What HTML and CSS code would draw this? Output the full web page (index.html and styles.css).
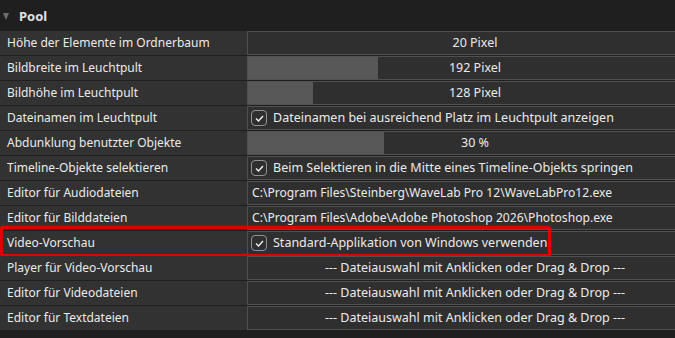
FILE: index.html
```html
<!DOCTYPE html>
<html lang="de">
<head>
    <meta charset="UTF-8">
    <meta name="viewport" content="width=device-width, initial-scale=1.0">
    <title>Einstellungen - Pool</title>
    <link rel="stylesheet" href="styles.css">
</head>
<body>
    <div class="panel">
        <!-- Group header -->
        <div class="group-head">
            <span class="arrow"></span>
            <span class="group-title">Pool</span>
        </div>

        <div class="rows">
            <div class="row">
                <div class="label">Höhe der Elemente im Ordnerbaum</div>
                <div class="value center">20 Pixel</div>
            </div>
            <div class="row">
                <div class="label">Bildbreite im Leuchtpult</div>
                <div class="value slider center"><span class="fill" style="width: 130px"></span><span class="num">192 Pixel</span></div>
            </div>
            <div class="row">
                <div class="label">Bildhöhe im Leuchtpult</div>
                <div class="value slider center"><span class="fill" style="width: 65px"></span><span class="num">128 Pixel</span></div>
            </div>
            <div class="row">
                <div class="label">Dateinamen im Leuchtpult</div>
                <div class="value check"><span class="box"><svg width="9" height="7" viewBox="0 0 9 7"><polyline points="1,3.5 3.5,6 8,1" /></svg></span>Dateinamen bei ausreichend Platz im Leuchtpult anzeigen</div>
            </div>
            <div class="row">
                <div class="label">Abdunklung benutzter Objekte</div>
                <div class="value slider center"><span class="fill" style="width: 136px"></span><span class="num">30 %</span></div>
            </div>
            <div class="row">
                <div class="label">Timeline-Objekte selektieren</div>
                <div class="value check"><span class="box"><svg width="9" height="7" viewBox="0 0 9 7"><polyline points="1,3.5 3.5,6 8,1" /></svg></span>Beim Selektieren in die Mitte eines Timeline-Objekts springen</div>
            </div>
            <div class="row">
                <div class="label">Editor für Audiodateien</div>
                <div class="value path">C:\Program Files\Steinberg\WaveLab Pro 12\WaveLabPro12.exe</div>
            </div>
            <div class="row">
                <div class="label">Editor für Bilddateien</div>
                <div class="value path">C:\Program Files\Adobe\Adobe Photoshop 2026\Photoshop.exe</div>
            </div>
            <div class="row highlighted">
                <div class="label">Video-Vorschau</div>
                <div class="value check"><span class="box"><svg width="9" height="7" viewBox="0 0 9 7"><polyline points="1,3.5 3.5,6 8,1" /></svg></span>Standard-Applikation von Windows verwenden</div>
                <span class="marker"></span>
            </div>
            <div class="row">
                <div class="label">Player für Video-Vorschau</div>
                <div class="value center">--- Dateiauswahl mit Anklicken oder Drag &amp; Drop ---</div>
            </div>
            <div class="row">
                <div class="label">Editor für Videodateien</div>
                <div class="value center">--- Dateiauswahl mit Anklicken oder Drag &amp; Drop ---</div>
            </div>
            <div class="row">
                <div class="label">Editor für Textdateien</div>
                <div class="value center">--- Dateiauswahl mit Anklicken oder Drag &amp; Drop ---</div>
            </div>
        </div>
    </div>
</body>
</html>
```

FILE: styles.css
```css
/* General Styles */
body {
    margin: 0;
    padding: 0;
    background: #1f1f1f;
    color: #ebebeb;
    font-family: "Noto Sans", "Open Sans", sans-serif;
    font-size: 12px;
    overflow: hidden;
}

.panel {
    width: 703px;
}

/* Group header */
.group-head {
    height: 31px;
    display: flex;
    align-items: center;
    padding-left: 3px;
    box-sizing: border-box;
}

.arrow {
    width: 0;
    height: 0;
    border-left: 3.5px solid transparent;
    border-right: 3.5px solid transparent;
    border-top: 7px solid #6e6e6e;
    margin-right: 10px;
    margin-top: 1px;
}

.group-title {
    font-size: 13px;
    font-weight: bold;
    color: #e0e0e0;
}

/* Rows */
.rows {
    display: flex;
    flex-direction: column;
    gap: 1px;
}

.row {
    display: grid;
    grid-template-columns: 247px 456px;
    height: 24px;
    position: relative;
}

.label {
    background: #323232;
    padding-left: 7px;
    line-height: 24px;
    white-space: nowrap;
}

.value {
    background: #2f2f2f;
    border: 1px solid #505050;
    box-sizing: border-box;
    font-size: 12.5px;
    line-height: 22px;
    white-space: nowrap;
    overflow: hidden;
}

.value.center {
    text-align: center;
}

.value.path {
    padding-left: 4px;
    font-size: 12.1px;
}

.value.slider {
    position: relative;
}

.slider .fill {
    position: absolute;
    left: 0;
    top: 0;
    bottom: 0;
    background: #575757;
}

.slider .num {
    position: relative;
}

.value.check {
    display: flex;
    align-items: center;
    padding-left: 3px;
}

.box {
    width: 14px;
    height: 14px;
    border: 1px solid #939393;
    border-radius: 4px;
    margin-right: 6px;
    display: flex;
    align-items: center;
    justify-content: center;
}

.box polyline {
    fill: none;
    stroke: #f0f0f0;
    stroke-width: 1.4;
}

/* Red annotation frame */
.marker {
    position: absolute;
    left: 0;
    top: -5px;
    width: 551px;
    height: 31px;
    border: 3px solid #e00000;
    border-radius: 2px;
    box-sizing: border-box;
    box-shadow: 0 0 3px rgba(255, 0, 0, 0.6);
}
```
